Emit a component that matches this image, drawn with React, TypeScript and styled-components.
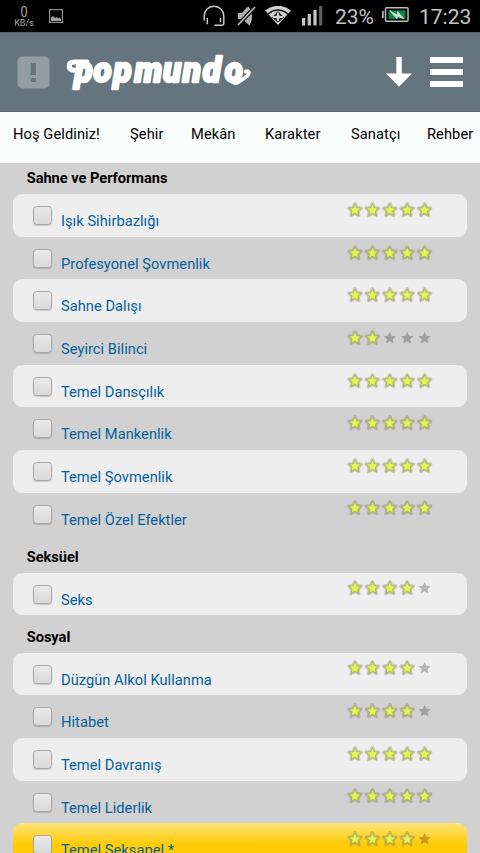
import React from "react";
import styled, { createGlobalStyle } from "styled-components";

const GlobalStyle = createGlobalStyle`
  * { box-sizing: border-box; }
  html, body { margin: 0; padding: 0; overflow: hidden; background: #d1d1d1; }
  body { font-family: Roboto, "Noto Sans", sans-serif; font-size: 14.67px; color: #000; }
`;

const Screen = styled.div`
  width: 480px;
  height: 853px;
  overflow: hidden;
  display: flex;
  flex-direction: column;
  background: #d1d1d1;
`;

const StatusBar = styled.header`
  flex: none;
  height: 32px;
  background: #000;
  color: #c4c4c4;
  display: flex;
  align-items: center;
  padding: 0 7px 0 13px;
`;

const Speed = styled.div`
  flex: none;
  width: 22px;
  text-align: center;
  color: #a4a4a4;
`;

const SpeedValue = styled.div`
  font-size: 15px;
  line-height: 13px;
  transform: scaleX(0.85);
`;

const SpeedUnit = styled.div`
  font-size: 9px;
  line-height: 8px;
  white-space: nowrap;
`;

const StatusIcon = styled.svg<{ $left: number }>`
  flex: none;
  display: block;
  margin-left: ${(p) => p.$left}px;
`;

const StatusText = styled.span<{ $left: number; $width: number }>`
  flex: none;
  width: ${(p) => p.$width}px;
  margin-left: ${(p) => p.$left}px;
  font-size: 21px;
  line-height: 32px;
  white-space: nowrap;
  padding-top: 1px;
`;

const AppBar = styled.div`
  flex: none;
  height: 80px;
  background: #64757e;
  border-top: 1px solid #52636b;
  border-bottom: 1px solid #586a73;
  display: flex;
  align-items: center;
  padding: 0 17px;
`;

const AlertBadge = styled.svg`
  display: block;
`;

const Logo = styled.svg`
  display: block;
  margin-left: 14px;
`;

const DownArrow = styled.svg`
  display: block;
  margin-left: auto;
`;

const MenuIcon = styled.svg`
  display: block;
  margin-left: 18px;
`;

const Nav = styled.nav`
  flex: none;
  height: 51px;
  background: #fafcfb;
  display: grid;
  grid-template-columns: 117px 61px 74px 86px 76px auto;
  padding-left: 13px;
  line-height: 44px;
  letter-spacing: 0.08px;
`;

const NavItem = styled.a`
  white-space: nowrap;
`;

const List = styled.main`
  flex: 1;
  padding: 0 13.5px 0 13px;
  overflow: hidden;
`;

const Heading = styled.h2<{ $first?: boolean }>`
  margin: 0;
  height: ${(p) => (p.$first ? 31 : 37.35)}px;
  padding: ${(p) => (p.$first ? 5 : 11.35)}px 0 0 13.7px;
  font-size: 14.67px;
  line-height: 20px;
  font-weight: 700;
  letter-spacing: -0.05px;
`;

const Row = styled.div<{ $tone: Tone }>`
  height: 42.67px;
  border-radius: 9px;
  display: flex;
  align-items: flex-start;
  padding-left: 20px;
  background: ${(p) =>
    p.$tone === "light"
      ? "#eeeeee"
      : p.$tone === "gold"
        ? "linear-gradient(#ffe37a 0, #ffcc08 21px, #ffcb00 100%)"
        : "transparent"};
`;

const Checkbox = styled.span`
  flex: none;
  width: 19px;
  height: 19px;
  margin-top: 12px;
  border: 1.5px solid #a6a6a6;
  border-radius: 3.5px;
  background: linear-gradient(#e9e9e9, #d9d9d9);
  box-shadow: 0 1px 1px rgba(0, 0, 0, 0.16);
`;

const Label = styled.a`
  width: 286px;
  margin: 17px 0 0 9px;
  line-height: 20px;
  letter-spacing: 0.03px;
  color: #04619b;
  white-space: nowrap;
`;

const Stars = styled.svg`
  flex: none;
  display: block;
  margin-top: 6.9px;
`;

const Definitions = styled.svg`
  position: absolute;
`;

type Tone = "light" | "plain" | "gold";
type Skill = [string, number, Tone];

const sections: { title: string; skills: Skill[] }[] = [
  {
    title: "Sahne ve Performans",
    skills: [
      ["Işık Sihirbazlığı", 5, "light"],
      ["Profesyonel Şovmenlik", 5, "plain"],
      ["Sahne Dalışı", 5, "light"],
      ["Seyirci Bilinci", 2, "plain"],
      ["Temel Dansçılık", 5, "light"],
      ["Temel Mankenlik", 5, "plain"],
      ["Temel Şovmenlik", 5, "light"],
      ["Temel Özel Efektler", 5, "plain"],
    ],
  },
  { title: "Seksüel", skills: [["Seks", 4, "light"]] },
  {
    title: "Sosyal",
    skills: [
      ["Düzgün Alkol Kullanma", 4, "light"],
      ["Hitabet", 4, "plain"],
      ["Temel Davranış", 5, "light"],
      ["Temel Liderlik", 5, "plain"],
      ["Temel Seksapel *", 4, "gold"],
    ],
  },
];

const navItems = ["Hoş Geldiniz!", "Şehir", "Mekân", "Karakter", "Sanatçı", "Rehber"];

const STAR = "M0-6.2 1.8-2.2 6.2-1.8 2.9 1.2 3.9 5.6 0 3.3-3.9 5.6-2.9 1.2-6.2-1.8-1.8-2.2Z";

function Rating({ value }: { value: number }) {
  return (
    <Stars width="88" height="18" viewBox="0 0 88 18">
      {[0, 1, 2, 3, 4].map((i) => (
        <g key={i} transform={`translate(${8 + i * 17.4} 9)`}>
          {i < value ? (
            <>
              <path d={STAR} fill="none" stroke="#70704e" strokeOpacity=".3" strokeWidth="3.4" strokeLinejoin="round" />
              <path d={STAR} fill="url(#star)" stroke="#a3aa5c" strokeWidth=".8" strokeLinejoin="round" />
              <path d={STAR} fill="#e2f850" transform="scale(.72)" />
            </>
          ) : (
            <path d={STAR} fill="#000" fillOpacity=".24" />
          )}
        </g>
      ))}
    </Stars>
  );
}

export default function App() {
  return (
    <Screen>
      <GlobalStyle />
      <Definitions width="0" height="0">
        <defs>
          <linearGradient id="star" x1="0" y1="0" x2="0" y2="1">
            <stop offset="0" stopColor="#eef78e" />
            <stop offset="1" stopColor="#bcd83c" />
          </linearGradient>
        </defs>
      </Definitions>
      <StatusBar>
        <Speed>
          <SpeedValue>0</SpeedValue>
          <SpeedUnit>KB/s</SpeedUnit>
        </Speed>
        <StatusIcon $left={14} width="14" height="14" viewBox="0 0 14 14">
          <rect x=".6" y=".6" width="12.8" height="12.8" fill="none" stroke="#8b8b8b" strokeWidth="1.2" />
          <path d="M2 12V8.5L4 7l2 2 1.5-1L9 9.2l1.5-.7L12 10v2Z" fill="#a0a0a0" />
        </StatusIcon>
        <StatusIcon $left={140} width="22" height="22" viewBox="0 0 22 22" fill="none" stroke="#c8c8c8" strokeWidth="1.5">
          <path d="M1.2 15.5V11a9.8 9.8 0 0 1 19.6 0v7.2q0 2-2 2H11.5M4.3 13v6.2M17.5 13v4.2" />
        </StatusIcon>
        <StatusIcon $left={12} width="19" height="22" viewBox="0 0 19 22">
          <path d="M1 8h4l5-6q4 4 4 9t-2 9L5 14H1Z" fill="#aaa" />
          <path d="M11 2q6 9 1 18" fill="none" stroke="#c4c4c4" strokeWidth="1.4" />
          <path d="M18 2 1 20" stroke="#000" strokeWidth="4" />
          <path d="M18 2 1 20" stroke="#c4c4c4" strokeWidth="1.5" />
        </StatusIcon>
        <StatusIcon $left={9} width="26" height="20" viewBox="0 0 26 20">
          <path d="M0 4.5Q13-5 26 4.500L13 19Z" fill="#d0d0d0" />
          <path d="M3 8Q13 0 23 8" fill="none" stroke="#111" strokeWidth="1.4" />
          <path d="m13 5 6 6.500-6 5-6-5Z" fill="#222" />
          <path d="M13 6.500v8.500M8 11h10" stroke="#d0d0d0" strokeWidth="1.800" />
          <path d="m13 8 3 3-3 3-3-3Z" fill="#d0d0d0" />
        </StatusIcon>
        <StatusIcon $left={11} width="21" height="20" viewBox="0 0 21 20" fill="#c6c6c6">
          <rect x="0" y="12" width="3.2" height="7.6" rx=".7" />
          <rect x="5.7" y="8" width="3.2" height="11.6" rx=".7" />
          <rect x="11.4" y="4" width="3.2" height="15.6" rx=".7" />
          <rect x="17.1" y="0" width="3.2" height="19.6" rx=".7" fill="#606060" />
        </StatusIcon>
        <StatusText $left={12} $width={40}>23%</StatusText>
        <StatusIcon $left={7} width="27" height="19" viewBox="0 0 27 19">
          <rect x="0" y="4" width="1.8" height="7" fill="#aaa" />
          <rect x="3.5" y=".8" width="22.5" height="13.5" rx="1" fill="none" stroke="#bdbdbd" strokeWidth="1.5" />
          <rect x="6.5" y="3.3" width="17" height="8.5" fill="#078b42" />
          <path d="m8 3.8 7.2 4.5.4-3.6L22 11.8l-6.5-2.8-.7 2.6Z" fill="#e0e0e0" stroke="#d0d0d0" />
        </StatusIcon>
        <StatusText $left={10} $width={53}>17:23</StatusText>
      </StatusBar>

      <AppBar>
        <AlertBadge width="33" height="33" viewBox="0 0 33 33">
          <rect x=".5" y=".5" width="32" height="32" rx="5" fill="#929da4" />
          <path d="M13.7 7h5.2v12h-5.2ZM13.7 22h5.2v4h-5.2Z" fill="#64757e" />
        </AlertBadge>
        <Logo width="190" height="52" viewBox="64 46 190 52" role="img" aria-label="popmundo">
          <text
            transform="scale(.95 1)"
            x="78.5 98.500 119.500 141.500 171.500 192.500 213.500 236.500"
            y="81.600"
            fill="#fff"
            stroke="#fff"
            strokeWidth="2.3"
            strokeLinejoin="round"
            fontFamily="Roboto"
            fontSize="35"
            fontWeight="900"
            fontStyle="italic"
          >
            popmundo
          </text>
          <path d="M87 62H74q-4.800 0-4.800 4t4.800 4.200" fill="none" stroke="#fff" strokeWidth="5" strokeLinecap="round" />
          <path d="M232 81.500q3 2.500 6 .8l8-5.300q3.500-2.500 2.700-4.800-.8-1.700-3-.7" fill="none" stroke="#fff" strokeWidth="3.800" strokeLinecap="round" />
        </Logo>
        <DownArrow width="26" height="30" viewBox="0 0 26 30">
          <path d="M10.3 0h5.5v16.5H26L13 29.8 0 16.5h10.3Z" fill="#fff" />
        </DownArrow>
        <MenuIcon width="33" height="30" viewBox="0 0 33 30" fill="#fff">
          <rect width="33" height="6" />
          <rect y="12" width="33" height="6" />
          <rect y="24" width="33" height="6" />
        </MenuIcon>
      </AppBar>

      <Nav>
        {navItems.map((item) => (
          <NavItem key={item}>{item}</NavItem>
        ))}
      </Nav>

      <List>
        {sections.map((section, index) => (
          <section key={section.title}>
            <Heading $first={index === 0}>{section.title}</Heading>
            {section.skills.map(([name, stars, tone]) => (
              <Row key={name} $tone={tone}>
                <Checkbox />
                <Label>{name}</Label>
                <Rating value={stars} />
              </Row>
            ))}
          </section>
        ))}
      </List>
    </Screen>
  );
}
